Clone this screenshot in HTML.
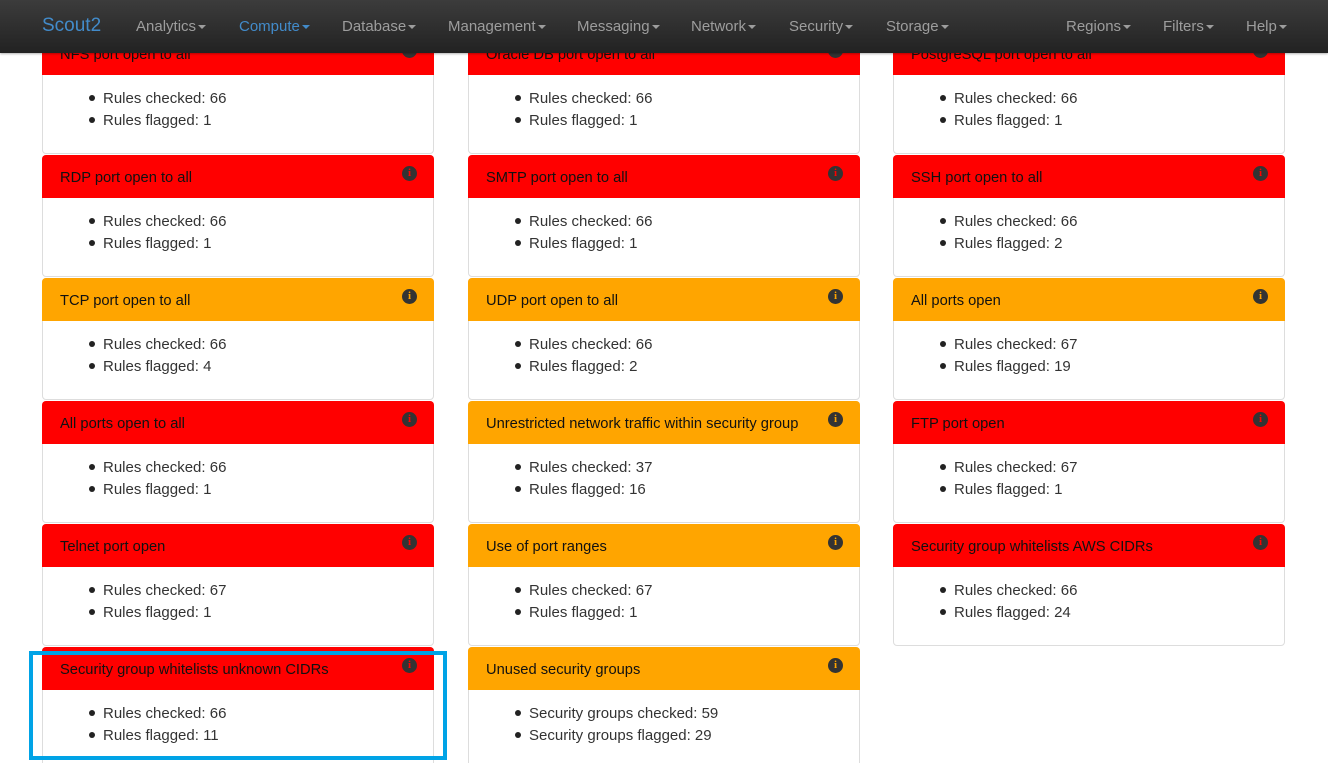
<!DOCTYPE html>
<html style="overflow:hidden;height:763px"><head><meta charset="utf-8"><style>
*{box-sizing:border-box;margin:0;padding:0}
body{width:1328px;height:763px;overflow:hidden;background:#fff;font-family:"Liberation Sans",sans-serif;position:relative}
.nav{position:absolute;left:0;top:0;width:1328px;height:53px;background:linear-gradient(#3c3c3c,#222);z-index:5;box-shadow:0 1px 2px rgba(0,0,0,.3)}
.nav span{position:absolute;top:18px;font-size:15px;color:#9d9d9d;white-space:nowrap}
.nav span.c::after{content:"";display:inline-block;margin-left:2px;vertical-align:middle;border-top:4px solid;border-left:4px solid transparent;border-right:4px solid transparent}
.p{position:absolute;width:392px;height:122px;border:1px solid #ddd;border-radius:4px;background:#fff}
.h{height:43px;margin:-1px -1px 0;border-radius:4px 4px 0 0;position:relative;font-size:14.7px;color:#111;padding:15px 0 0 18px}
.r{background:#f00}.o{background:#ffa500}
.i{position:absolute;right:17px;top:11px;width:15px;height:15px;border-radius:50%;background:#333;color:#f00;font:bold 11px/15px "Liberation Serif",serif;text-align:center}
.o .i{color:#ffa500}
ul{position:absolute;left:60px;top:55px;font-size:15px;color:#333;line-height:22px;list-style:none}
li::before{content:"";display:inline-block;width:6px;height:6px;border-radius:50%;background:#222;margin:0 8px 2px -14px;vertical-align:middle}
</style></head><body>
<div class="nav">
<span style="left:42px;top:15px;font-size:19px;color:#428bca">Scout2</span>
<span class="c" style="left:136px">Analytics</span>
<span class="c" style="left:239px;color:#428bca">Compute</span>
<span class="c" style="left:342px">Database</span>
<span class="c" style="left:448px">Management</span>
<span class="c" style="left:577px">Messaging</span>
<span class="c" style="left:691px">Network</span>
<span class="c" style="left:789px">Security</span>
<span class="c" style="left:886px">Storage</span>
<span class="c" style="left:1066px">Regions</span>
<span class="c" style="left:1163px">Filters</span>
<span class="c" style="left:1246px">Help</span>
</div>

<div class="p" style="left:42px;top:32px"><div class="h r">NFS port open to all<div class="i">i</div></div><ul><li>Rules checked: 66</li><li>Rules flagged: 1</li></ul></div>
<div class="p" style="left:468px;top:32px"><div class="h r">Oracle DB port open to all<div class="i">i</div></div><ul><li>Rules checked: 66</li><li>Rules flagged: 1</li></ul></div>
<div class="p" style="left:893px;top:32px"><div class="h r">PostgreSQL port open to all<div class="i">i</div></div><ul><li>Rules checked: 66</li><li>Rules flagged: 1</li></ul></div>

<div class="p" style="left:42px;top:155px"><div class="h r">RDP port open to all<div class="i">i</div></div><ul><li>Rules checked: 66</li><li>Rules flagged: 1</li></ul></div>
<div class="p" style="left:468px;top:155px"><div class="h r">SMTP port open to all<div class="i">i</div></div><ul><li>Rules checked: 66</li><li>Rules flagged: 1</li></ul></div>
<div class="p" style="left:893px;top:155px"><div class="h r">SSH port open to all<div class="i">i</div></div><ul><li>Rules checked: 66</li><li>Rules flagged: 2</li></ul></div>

<div class="p" style="left:42px;top:278px"><div class="h o">TCP port open to all<div class="i">i</div></div><ul><li>Rules checked: 66</li><li>Rules flagged: 4</li></ul></div>
<div class="p" style="left:468px;top:278px"><div class="h o">UDP port open to all<div class="i">i</div></div><ul><li>Rules checked: 66</li><li>Rules flagged: 2</li></ul></div>
<div class="p" style="left:893px;top:278px"><div class="h o">All ports open<div class="i">i</div></div><ul><li>Rules checked: 67</li><li>Rules flagged: 19</li></ul></div>

<div class="p" style="left:42px;top:401px"><div class="h r">All ports open to all<div class="i">i</div></div><ul><li>Rules checked: 66</li><li>Rules flagged: 1</li></ul></div>
<div class="p" style="left:468px;top:401px"><div class="h o">Unrestricted network traffic within security group<div class="i">i</div></div><ul><li>Rules checked: 37</li><li>Rules flagged: 16</li></ul></div>
<div class="p" style="left:893px;top:401px"><div class="h r">FTP port open<div class="i">i</div></div><ul><li>Rules checked: 67</li><li>Rules flagged: 1</li></ul></div>

<div class="p" style="left:42px;top:524px"><div class="h r">Telnet port open<div class="i">i</div></div><ul><li>Rules checked: 67</li><li>Rules flagged: 1</li></ul></div>
<div class="p" style="left:468px;top:524px"><div class="h o">Use of port ranges<div class="i">i</div></div><ul><li>Rules checked: 67</li><li>Rules flagged: 1</li></ul></div>
<div class="p" style="left:893px;top:524px"><div class="h r">Security group whitelists AWS CIDRs<div class="i">i</div></div><ul><li>Rules checked: 66</li><li>Rules flagged: 24</li></ul></div>

<div class="p" style="left:42px;top:647px;height:116px;border-bottom:none;border-radius:4px 4px 0 0"><div class="h r">Security group whitelists unknown CIDRs<div class="i">i</div></div><ul><li>Rules checked: 66</li><li>Rules flagged: 11</li></ul></div>
<div class="p" style="left:468px;top:647px;height:116px;border-bottom:none;border-radius:4px 4px 0 0"><div class="h o">Unused security groups<div class="i">i</div></div><ul><li>Security groups checked: 59</li><li>Security groups flagged: 29</li></ul></div>

<div style="position:absolute;left:29px;top:651px;width:418px;height:109px;border:4px solid #00a3e6"></div>
</body></html>
